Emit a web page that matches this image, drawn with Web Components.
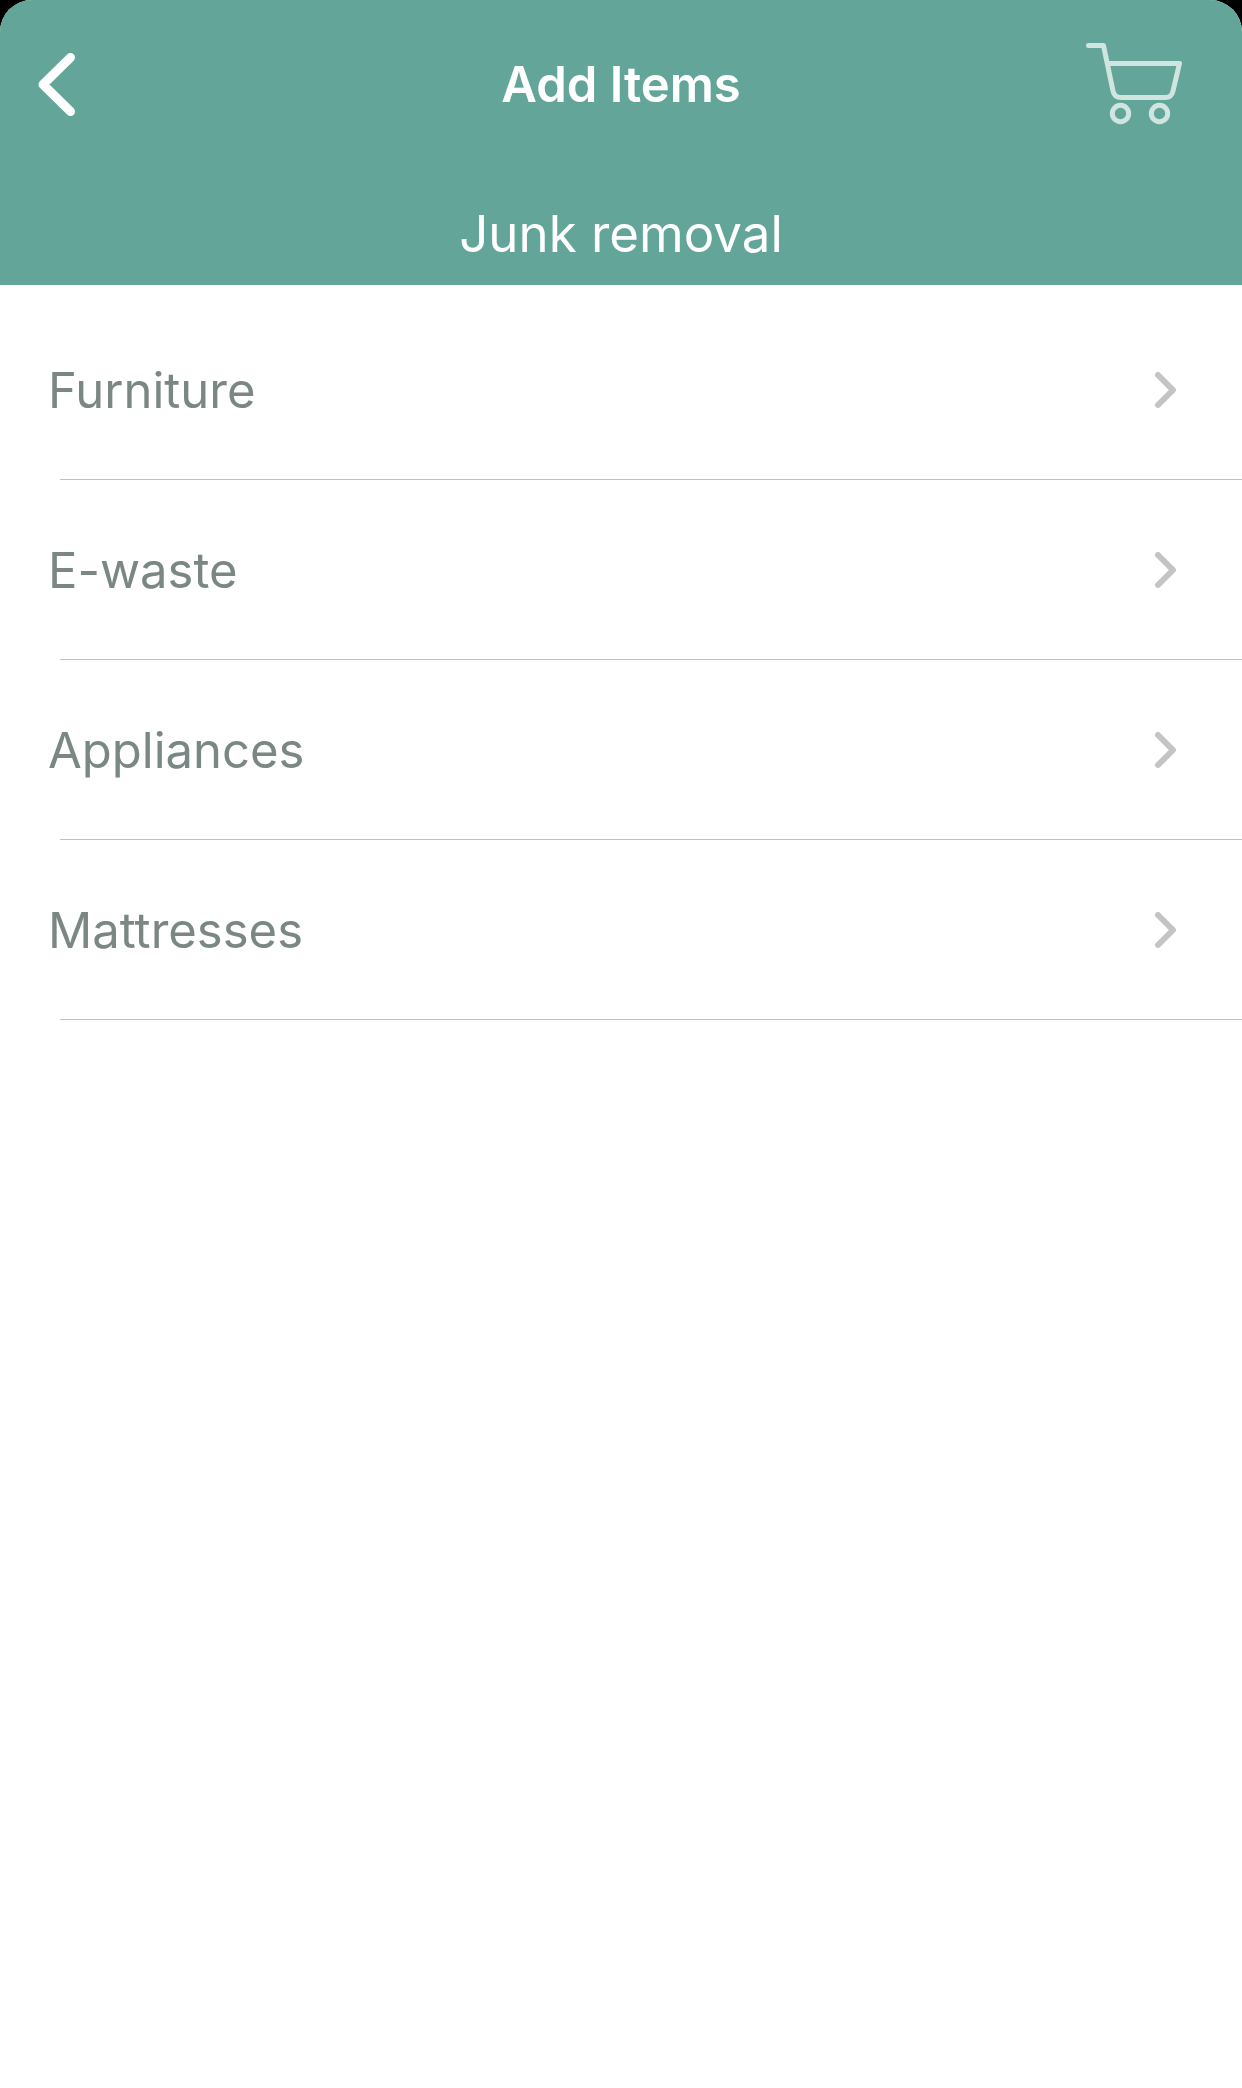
<!DOCTYPE html>
<html lang="en">
<head>
<meta charset="utf-8">
<meta name="viewport" content="width=device-width, initial-scale=1">
<title>Add Items</title>
<style>
  html { background: #000; }
  body { margin: 0; font-family: Inter, "Liberation Sans", sans-serif; }
</style>
</head>
<body>
<add-items-page></add-items-page>

<script>
class NavHeader extends HTMLElement {
  constructor() {
    super();
    this.attachShadow({ mode: "open" }).innerHTML = `
      <style>
        :host { display: block; background: #63a699; color: #fff; }
        .bar { display: grid; grid-template-columns: 1fr auto 1fr; align-items: center; height: 168px; }
        button { appearance: none; border: 0; padding: 0; background: none; color: inherit; display: block; cursor: pointer; }
        .back { justify-self: start; margin-left: 36px; }
        .cart { justify-self: end; margin-right: 58px; }
        svg { display: block; fill: none; stroke: currentColor; stroke-linecap: round; stroke-linejoin: round; }
        h1 { margin: 0; padding-top: 2px; font-size: 49px; line-height: 60px; font-weight: 600; }
        p { margin: 0; padding: 34px 0 19px; font-size: 51px; line-height: 64px; font-weight: 400; text-align: center; }
      </style>
      <header>
        <div class="bar">
          <button class="back" type="button" aria-label="Back">
            <svg width="42" height="68" viewBox="36 50 42 68" stroke-width="9"><path d="M70.500 57.500 43 84.500l27.500 27"/></svg>
          </button>
          <h1><slot name="title"></slot></h1>
          <button class="cart" type="button" aria-label="Cart">
            <svg width="100" height="84" viewBox="1084 42 100 84" stroke-width="5" opacity=".7">
              <path d="M1088.500 45.500H1103.500L1113 91Q1114.500 97.500 1121 97.500H1165.500Q1171.500 97.500 1173 91L1179.500 63.500H1108"/>
              <circle cx="1120.500" cy="113.500" r="8.200"/><circle cx="1159.500" cy="113.500" r="8.200"/>
            </svg>
          </button>
        </div>
        <p><slot name="subtitle"></slot></p>
      </header>`;
  }
}
customElements.define("nav-header", NavHeader);

class CategoryRow extends HTMLElement {
  constructor() {
    super();
    this.attachShadow({ mode: "open" }).innerHTML = `
      <style>
        :host { display: block; }
        a { display: flex; align-items: center; justify-content: space-between; height: 179px; padding: 0 64px 0 48px; color: #7b8784; font-size: 49px; line-height: 60px; text-decoration: none; }
        span { padding-top: 3px; }
        svg { display: block; fill: none; stroke: #c4c4c6; stroke-width: 6; stroke-linecap: round; stroke-linejoin: round; }
        .line { height: 1px; margin-left: 60px; background: #c1c1c3; }
      </style>
      <a href="#">
        <span><slot></slot></span>
        <svg width="24" height="38" viewBox="0 0 24 38" aria-hidden="true"><path d="M4 4 19 19 4 34"/></svg>
      </a>
      <div class="line"></div>`;
  }
}
customElements.define("category-row", CategoryRow);

class AddItemsPage extends HTMLElement {
  constructor() {
    super();
    this.attachShadow({ mode: "open" }).innerHTML = `
      <style>
        :host { display: block; min-height: 100vh; overflow: hidden; border-radius: 32px 32px 0 0; background: #fff; }
        nav { padding-top: 15px; }
      </style>
      <nav-header>
        <span slot="title">Add Items</span>
        <span slot="subtitle">Junk removal</span>
      </nav-header>
      <nav aria-label="Categories">
        <category-row>Furniture</category-row>
        <category-row>E-waste</category-row>
        <category-row>Appliances</category-row>
        <category-row>Mattresses</category-row>
      </nav>`;
  }
}
customElements.define("add-items-page", AddItemsPage);
</script>
</body>
</html>
